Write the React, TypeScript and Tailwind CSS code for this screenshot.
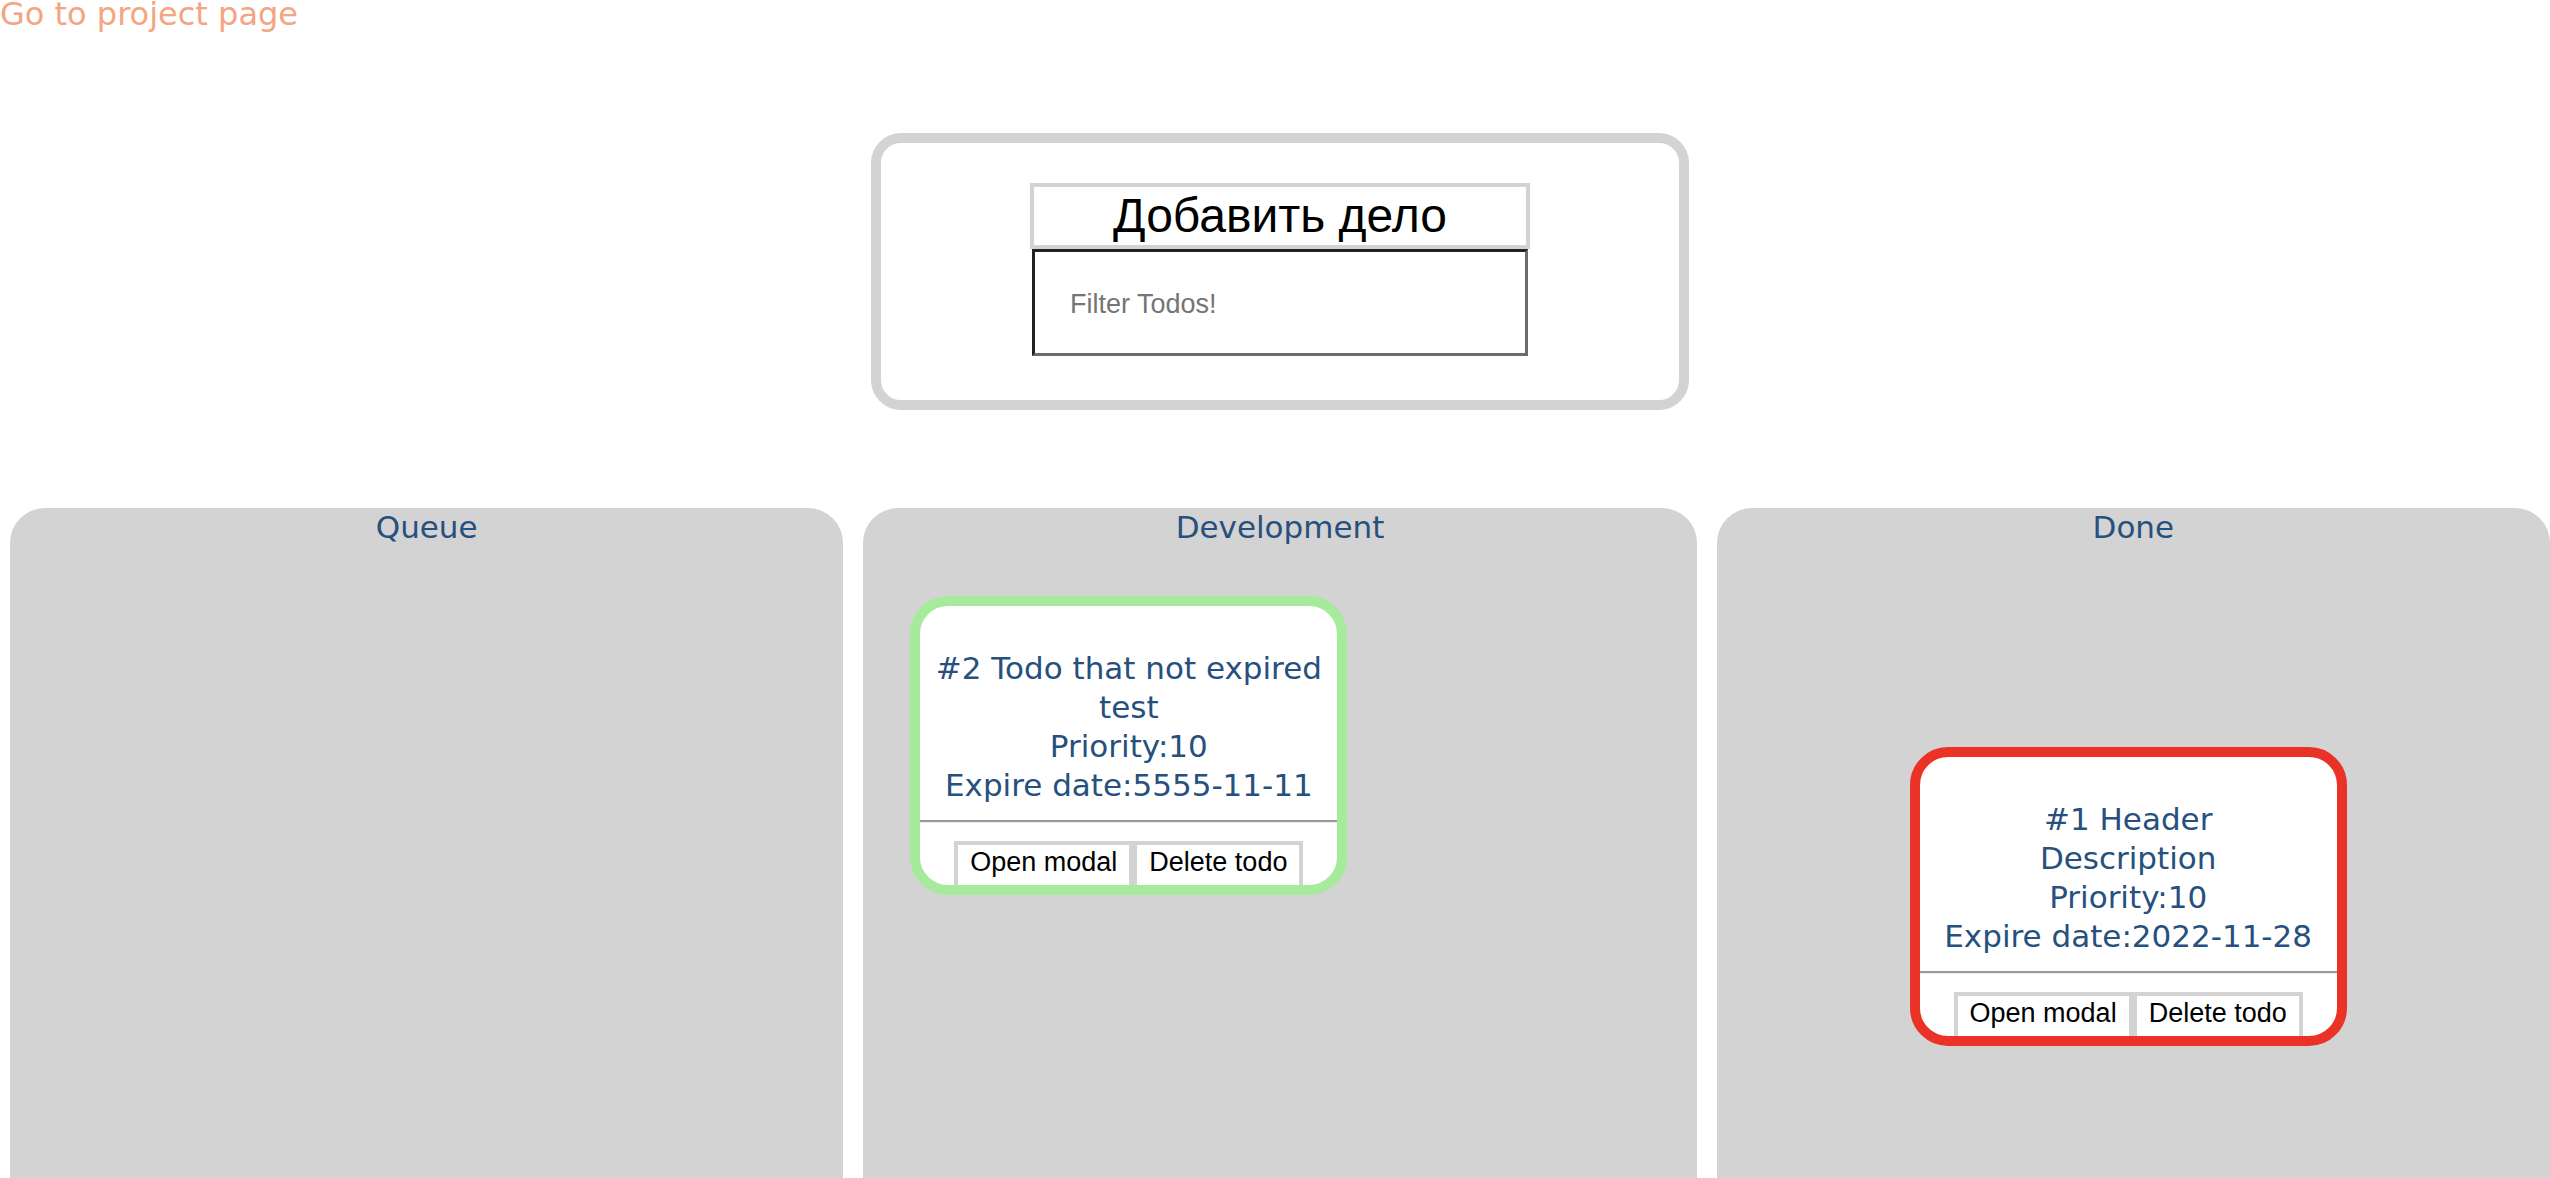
type Todo = {
    id: number
    title: string
    description: string
    priority: number
    expire: string
}

const titleFont = "font-['DejaVu_Sans',sans-serif]"

function TodoCard({ todo, border, className }: { todo: Todo; border: string; className: string }) {
    return (
        <div
            className={`w-[437px] h-[299px] overflow-hidden rounded-[38px] border-[10px] bg-white ${border} ${className}`}
        >
            <div className={`pt-[43px] px-[6px] text-center text-[31px] leading-[39px] text-[#26507d] ${titleFont}`}>
                <div>#{todo.id} {todo.title}</div>
                <div>{todo.description}</div>
                <div>Priority:{todo.priority}</div>
                <div>Expire date:{todo.expire}</div>
            </div>
            <div className="mt-[15px] border-t-2 border-b border-t-[#9a9a9a] border-b-[#ececec]" />
            <div className="flex justify-center mt-[18px] font-['Liberation_Sans',Arial,sans-serif]">
                <button className="px-[12px] pt-[2px] pb-[10px] border-4 border-[#d3d3d3] bg-white text-[27px] leading-[31px] text-black">
                    Open modal
                </button>
                <button className="px-[12px] pt-[2px] pb-[10px] border-4 border-[#d3d3d3] bg-white text-[27px] leading-[31px] text-black">
                    Delete todo
                </button>
            </div>
        </div>
    )
}

function Column({ title, children }: { title: string; children?: React.ReactNode }) {
    return (
        <div className="h-[800px] rounded-[35px] bg-[#d3d3d3]">
            <div className={`text-center text-[31px] leading-[39px] text-[#26507d] ${titleFont}`}>{title}</div>
            {children}
        </div>
    )
}

export default function App() {
    const dev: Todo = { id: 2, title: "Todo that not expired", description: "test", priority: 10, expire: "5555-11-11" }
    const done: Todo = { id: 1, title: "Header", description: "Description", priority: 10, expire: "2022-11-28" }

    return (
        <div className="h-[1178px] overflow-hidden bg-white">
            <a className={`block w-fit text-[32px] leading-[28px] text-[#f4a582] ${titleFont}`}>Go to project page</a>

            <div className="flex justify-center pl-[10px] mt-[105px]">
                <div className="w-[818px] h-[277px] rounded-[30px] border-[10px] border-[#d3d3d3] flex flex-col items-center pt-[40px]">
                    <div className="w-[500px] h-[66px] border-4 border-[#d3d3d3] flex items-center justify-center font-['Liberation_Sans',Arial,sans-serif] text-[48px] text-black">
                        Добавить дело
                    </div>
                    <input
                        placeholder="Filter Todos!"
                        className="w-[496px] h-[107px] border-[3px] border-t-[#222] border-l-[#222] border-b-[#6b6b6b] border-r-[#6b6b6b] pl-[35px] pt-[3px] font-['Liberation_Sans',Arial,sans-serif] text-[27px] text-black placeholder:text-[#757575] outline-none"
                    />
                </div>
            </div>

            <div className="grid grid-cols-3 gap-[20px] pl-[10px] mt-[98px]">
                <Column title="Queue" />
                <Column title="Development">
                    <TodoCard todo={dev} border="border-[#a6eb9b]" className="ml-[47px] mt-[49px]" />
                </Column>
                <Column title="Done">
                    <TodoCard todo={done} border="border-[#ea3326]" className="ml-[193px] mt-[200px]" />
                </Column>
            </div>
        </div>
    )
}
